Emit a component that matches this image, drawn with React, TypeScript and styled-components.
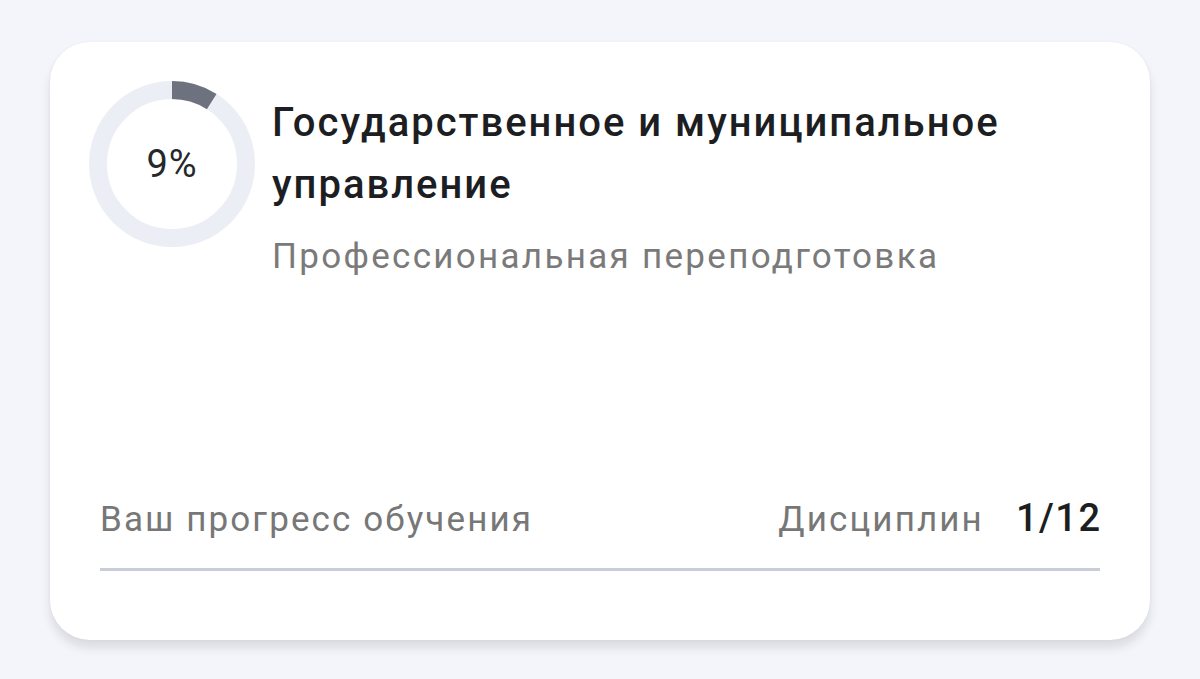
import React, { FC } from 'react';
import styled, { createGlobalStyle } from 'styled-components';

const GlobalStyle = createGlobalStyle`
  html, body {
    margin: 0;
    padding: 0;
    background: #f4f5fa;
    font-family: Roboto, 'Noto Sans', 'Liberation Sans', sans-serif;
  }
`;

type RingProps = {
  percent: number;
};

const ProgressRing: FC<RingProps> = ({ percent }) => {
  const r = 74;
  const c = 2 * Math.PI * r;
  return (
    <RingBox>
      <svg width="166" height="166" viewBox="0 0 166 166">
        <circle cx="83" cy="83" r={r} fill="none" stroke="#eceef5" strokeWidth="18" />
        <circle
          cx="83"
          cy="83"
          r={r}
          fill="none"
          stroke="#6d727e"
          strokeWidth="18"
          strokeDasharray={`${(c * percent) / 100} ${c}`}
          transform="rotate(-90 83 83)"
        />
      </svg>
      <Percent>{percent}%</Percent>
    </RingBox>
  );
};

export default function App() {
  return (
    <>
      <GlobalStyle />
      <Page>
        <Card>
          <Header>
            <ProgressRing percent={9} />
            <Info>
              <Title>Государственное и муниципальное управление</Title>
              <Subtitle>Профессиональная переподготовка</Subtitle>
            </Info>
          </Header>
          <Footer>
            <Label>Ваш прогресс обучения</Label>
            <Counter>
              <Label>Дисциплин</Label>
              <Value>1/12</Value>
            </Counter>
          </Footer>
          <Divider />
        </Card>
      </Page>
    </>
  );
}

const Page = styled.div`
  width: 1200px;
  height: 679px;
  padding: 42px 50px 0;
  box-sizing: border-box;
`;

const Card = styled.div`
  height: 598px;
  box-sizing: border-box;
  background: #ffffff;
  border-radius: 40px;
  box-shadow: 0 8px 10px rgba(40, 44, 60, 0.12), 0 0 3px rgba(40, 44, 60, 0.04);
  padding: 39px 50px 0;
  display: flex;
  flex-direction: column;
`;

const Header = styled.div`
  display: flex;
  align-items: flex-start;
  gap: 17px;
  margin-left: -11px;
  flex: 1;
`;

const RingBox = styled.div`
  position: relative;
  width: 166px;
  height: 166px;
  flex-shrink: 0;
  svg {
    display: block;
  }
`;

const Percent = styled.div`
  position: absolute;
  inset: 0;
  display: flex;
  align-items: center;
  justify-content: center;
  font-size: 38px;
  color: #26282c;
  letter-spacing: 1px;
`;

const Info = styled.div`
  padding-top: 11px;
  max-width: 800px;
`;

const Title = styled.h2`
  margin: 0;
  font-size: 40px;
  font-weight: 500;
  line-height: 62px;
  color: #1c1e22;
  letter-spacing: 2px;
`;

const Subtitle = styled.div`
  margin-top: 20px;
  font-size: 35px;
  color: #7a7a7a;
  letter-spacing: 2.3px;
`;

const Footer = styled.div`
  display: flex;
  justify-content: space-between;
  align-items: baseline;
`;

const Counter = styled.div`
  display: flex;
  align-items: baseline;
  gap: 32px;
`;

const Label = styled.span`
  font-size: 35px;
  color: #777777;
  letter-spacing: 2.1px;
`;

const Value = styled.span`
  font-size: 38px;
  font-weight: 500;
  color: #1c1e22;
  letter-spacing: 1.5px;
  margin-right: -1.5px;
`;

const Divider = styled.div`
  height: 3px;
  background: #c9cdda;
  margin: 28px 0 69px;
`;
